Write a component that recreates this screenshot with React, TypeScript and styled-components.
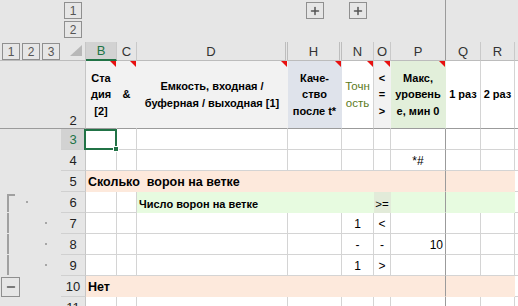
import type { ReactNode } from 'react';
import styled, { createGlobalStyle } from 'styled-components';
import { Plus, Minus } from 'lucide-react';

const GREEN = '#217346';
const GRID = '#d4d4d4';
const FREEZE = '#9b9b9b';
const PANE = '#e6e6e6';
const SEL = '#d2d2d2';
const GRAY = '#f2f2f2';
const PEACH = '#fde9dc';
const MINT = '#e7fbe0';

type Col = { key: string; w: number; hidden?: boolean; freeze?: boolean; plus?: boolean };

const COLS: Col[] = [
  { key: 'B', w: 31 },
  { key: 'C', w: 20 },
  { key: 'D', w: 151, hidden: true },
  { key: 'H', w: 54, hidden: true, plus: true },
  { key: 'N', w: 32, plus: true },
  { key: 'O', w: 17 },
  { key: 'P', w: 55, freeze: true },
  { key: 'Q', w: 35 },
  { key: 'R', w: 34 },
  { key: 'S', w: 80 },
];

type Spec = {
  t?: ReactNode;
  bg?: string;
  a?: 'l' | 'c' | 'r';
  mid?: boolean;
  b?: boolean;
  fs?: number;
  color?: string;
  note?: boolean;
};

type RowSpec = {
  n: number;
  cells: Partial<Record<string, Spec>>;
  bracket?: 'start' | 'mid';
  dot?: 2 | 3;
  minus?: boolean;
  selected?: string;
};

const fill = (keys: string[], spec: Spec) =>
  Object.fromEntries(keys.map((k) => [k, spec])) as Record<string, Spec>;

const DATA = ['B', 'C', 'D', 'H', 'N', 'O', 'P', 'Q', 'R'];

const GlobalStyle = createGlobalStyle`
  html, body { margin: 0; padding: 0; background: ${PANE}; }
  body { font-family: "Liberation Sans", Arial, sans-serif; color: #000; overflow: hidden; }
`;

const Sheet = styled.div`
  display: grid;
  grid-template-columns: 61px 25px ${COLS.map((c) => `${c.w}px`).join(' ')};
  grid-template-rows: 42px 19px 68px repeat(9, 21px);
  width: 518px;
  height: 306px;
  overflow: hidden;
  background: ${PANE};
`;

/* --- outline pane --- */

const TopPane = styled.div<{ $freeze?: boolean }>`
  box-sizing: border-box;
  display: flex;
  flex-direction: column;
  align-items: center;
  gap: 2px;
  padding-top: 2px;
  border-right: 1px solid ${(p) => (p.$freeze ? FREEZE : 'transparent')};
`;

const LevelRow = styled.div`
  display: flex;
  gap: 2px;
  height: 19px;
  box-sizing: border-box;
  padding: 1px 0 0 2px;
  border-bottom: 1px solid #bcbcbc;
`;

const LevelBtn = styled.div`
  box-sizing: border-box;
  width: 18px;
  height: 17px;
  border: 1px solid #8f8f8f;
  display: flex;
  align-items: center;
  justify-content: center;
  font-size: 12px;
  color: #555;
`;

const SideCell = styled.div<{ $freeze?: boolean }>`
  box-sizing: border-box;
  display: flex;
  align-items: stretch;
  padding-left: 1px;
  border-bottom: 1px solid ${(p) => (p.$freeze ? FREEZE : 'transparent')};
`;

const Bracket = styled.div<{ $start?: boolean }>`
  width: 6px;
  margin-left: 6px;
  margin-top: ${(p) => (p.$start ? '2px' : '0')};
  border-left: 2px solid #a0a0a0;
  border-top: ${(p) => (p.$start ? '2px solid #a0a0a0' : 'none')};
`;

const Gap = styled.div`
  width: 14px;
`;

const Dot = styled.span<{ $level: number }>`
  align-self: center;
  width: 2px;
  height: 2px;
  margin-left: ${(p) => (p.$level === 2 ? 11 : 30)}px;
  background: #a6a6a6;
`;

const MinusBtn = styled.div`
  box-sizing: border-box;
  width: 19px;
  height: 20px;
  margin-top: 1px;
  border: 1px solid #8f8f8f;
  display: flex;
  align-items: center;
  justify-content: center;
  color: #555;
`;

/* --- headers --- */

const Corner = styled.div`
  box-sizing: border-box;
  display: flex;
  justify-content: flex-end;
  align-items: flex-end;
  padding: 0 3px 4px 0;
  border-right: 1px solid #c6c6c6;
  border-bottom: 1px solid #bcbcbc;
`;

const CornerMark = styled.span`
  width: 0;
  height: 0;
  border-bottom: 11px solid #b8b8b8;
  border-left: 12px solid transparent;
`;

const ColHead = styled.div<{ $sel?: boolean; $hidden?: boolean; $freeze?: boolean }>`
  box-sizing: border-box;
  display: flex;
  align-items: center;
  justify-content: center;
  font-size: 13px;
  color: ${(p) => (p.$sel ? GREEN : '#333')};
  background: ${(p) => (p.$sel ? SEL : PANE)};
  border-right: ${(p) =>
    p.$freeze ? `1px solid ${FREEZE}` : p.$hidden ? '3px double #bdbdbd' : '1px solid #c9c9c9'};
  border-bottom: ${(p) => (p.$sel ? `2px solid ${GREEN}` : '1px solid #bcbcbc')};
`;

const RowHead = styled.div<{ $sel?: boolean; $tall?: boolean; $freeze?: boolean }>`
  box-sizing: border-box;
  display: flex;
  justify-content: center;
  align-items: ${(p) => (p.$tall ? 'flex-end' : 'center')};
  font-size: 13px;
  color: ${(p) => (p.$sel ? GREEN : '#222')};
  background: ${(p) => (p.$sel ? SEL : PANE)};
  border-right: 1px solid #c6c6c6;
  border-bottom: 1px solid ${(p) => (p.$freeze ? FREEZE : '#d0d0d0')};
`;

/* --- cells --- */

const Cell = styled.div<{
  $bg?: string;
  $a?: string;
  $mid?: boolean;
  $freeze?: boolean;
  $edge?: boolean;
  $fs?: number;
  $b?: boolean;
  $color?: string;
}>`
  position: relative;
  box-sizing: border-box;
  display: flex;
  align-items: ${(p) => (p.$mid ? 'center' : 'flex-end')};
  justify-content: ${(p) => (p.$a === 'c' ? 'center' : p.$a === 'r' ? 'flex-end' : 'flex-start')};
  text-align: ${(p) => (p.$a === 'c' ? 'center' : p.$a === 'r' ? 'right' : 'left')};
  padding: 0 2px ${(p) => (p.$mid ? 0 : 2)}px;
  background: ${(p) => p.$bg ?? '#fff'};
  border-right: 1px solid ${(p) => (p.$freeze ? FREEZE : p.$bg ?? GRID)};
  border-bottom: 1px solid ${(p) => (p.$edge ? FREEZE : p.$bg ?? GRID)};
  font-size: ${(p) => p.$fs ?? 12}px;
  font-weight: ${(p) => (p.$b ? 700 : 400)};
  color: ${(p) => p.$color ?? '#000'};
  white-space: pre;
`;

const Text = styled.span`
  position: relative;
  z-index: 1;
`;

const Lines = styled.span`
  display: block;
  line-height: 16.5px;
  white-space: nowrap;
`;

const Note = styled.span`
  position: absolute;
  top: 0;
  right: 0;
  border-top: 6px solid #e81010;
  border-left: 6px solid transparent;
`;

const Selection = styled.span`
  position: absolute;
  top: 0;
  left: -2px;
  right: -1px;
  bottom: -1px;
  border: 2px solid ${GREEN};
  z-index: 2;

  &::after {
    content: '';
    position: absolute;
    right: -4px;
    bottom: -4px;
    width: 4px;
    height: 4px;
    background: ${GREEN};
    border: 1px solid #fff;
  }
`;

const head = (lines: string[], extra: Spec = {}): Spec => ({
  t: (
    <>
      {lines.map((l, i) => (
        <Lines key={i}>{l}</Lines>
      ))}
    </>
  ),
  a: 'c',
  mid: true,
  b: true,
  fs: 11,
  ...extra,
});

const ROWS: RowSpec[] = [
  {
    n: 2,
    cells: {
      B: head(['Ста', 'дия', '[2]'], { bg: GRAY, note: true }),
      C: head(['&'], { bg: GRAY, note: true }),
      D: head(['Емкость, входная /', 'буферная / выходная [1]'], { bg: GRAY, note: true }),
      H: head(['Каче-', 'ство', 'после t*'], { bg: '#dfe3eb', note: true }),
      N: head(['Точн', 'ость'], { color: '#5b7a1c', b: false, fs: 11.5, note: true }),
      O: head(['<', '=', '>'], { bg: GRAY, note: true }),
      P: head(['Макс,', 'уровень', 'е, мин 0'], { bg: '#e2efda', note: true }),
      Q: head(['1 раз']),
      R: head(['2 раз']),
    },
  },
  { n: 3, cells: {}, selected: 'B' },
  { n: 4, cells: { P: { t: '*#', a: 'c' } } },
  {
    n: 5,
    cells: {
      ...fill(DATA, { bg: PEACH }),
      B: { bg: PEACH, t: 'Сколько  ворон на ветке', b: true, fs: 12.5 },
    },
  },
  {
    n: 6,
    bracket: 'start',
    dot: 2,
    cells: {
      ...fill(['D', 'H', 'N', 'P', 'Q', 'R'], { bg: MINT }),
      D: { bg: MINT, t: 'Число ворон на ветке', b: true, fs: 11 },
      O: { bg: '#e2ebd9', t: '>=', a: 'c', fs: 11.5 },
    },
  },
  { n: 7, bracket: 'mid', dot: 3, cells: { N: { t: '1', a: 'c' }, O: { t: '<', a: 'c' } } },
  {
    n: 8,
    bracket: 'mid',
    dot: 3,
    cells: { N: { t: '-', a: 'c' }, O: { t: '-', a: 'c' }, P: { t: '10', a: 'r' } },
  },
  { n: 9, bracket: 'mid', dot: 3, cells: { N: { t: '1', a: 'c' }, O: { t: '>', a: 'c' } } },
  {
    n: 10,
    minus: true,
    cells: { ...fill(DATA, { bg: PEACH }), B: { bg: PEACH, t: 'Нет', b: true, fs: 12.5 } },
  },
  { n: 11, cells: {} },
];

const SELECTED_COL = 'B';

export default function App() {
  return (
    <>
      <GlobalStyle />
      <Sheet>
        {/* outline bar above the column headers */}
        <TopPane />
        <TopPane>
          <LevelBtn>1</LevelBtn>
          <LevelBtn>2</LevelBtn>
        </TopPane>
        {COLS.map((c) => (
          <TopPane key={c.key} $freeze={c.freeze}>
            {c.plus && (
              <LevelBtn>
                <Plus size={12} strokeWidth={3} />
              </LevelBtn>
            )}
          </TopPane>
        ))}

        {/* column headers */}
        <LevelRow>
          <LevelBtn>1</LevelBtn>
          <LevelBtn>2</LevelBtn>
          <LevelBtn>3</LevelBtn>
        </LevelRow>
        <Corner>
          <CornerMark />
        </Corner>
        {COLS.map((c) => (
          <ColHead key={c.key} $sel={c.key === SELECTED_COL} $hidden={c.hidden} $freeze={c.freeze}>
            {c.key}
          </ColHead>
        ))}

        {/* rows */}
        {ROWS.map((r) => {
          const frozenEdge = r.n === 2;
          return [
            <SideCell key={`o${r.n}`} $freeze={frozenEdge}>
              {r.minus ? (
                <MinusBtn>
                  <Minus size={12} strokeWidth={3} />
                </MinusBtn>
              ) : r.bracket ? (
                <Bracket $start={r.bracket === 'start'} />
              ) : (
                <Gap />
              )}
              {r.dot && <Dot $level={r.dot} />}
            </SideCell>,
            <RowHead key={`h${r.n}`} $sel={r.selected !== undefined} $tall={r.n === 2} $freeze={frozenEdge}>
              {r.n}
            </RowHead>,
            ...COLS.map((c) => {
              const s = r.cells[c.key] ?? {};
              return (
                <Cell
                  key={`${c.key}${r.n}`}
                  $bg={s.bg}
                  $a={s.a}
                  $mid={s.mid}
                  $fs={s.fs}
                  $b={s.b}
                  $color={s.color}
                  $freeze={c.freeze && !frozenEdge}
                  $edge={frozenEdge}
                >
                  {s.t !== undefined && <Text>{s.t}</Text>}
                  {s.note && <Note />}
                  {r.selected === c.key && <Selection />}
                </Cell>
              );
            }),
          ];
        })}
      </Sheet>
    </>
  );
}
